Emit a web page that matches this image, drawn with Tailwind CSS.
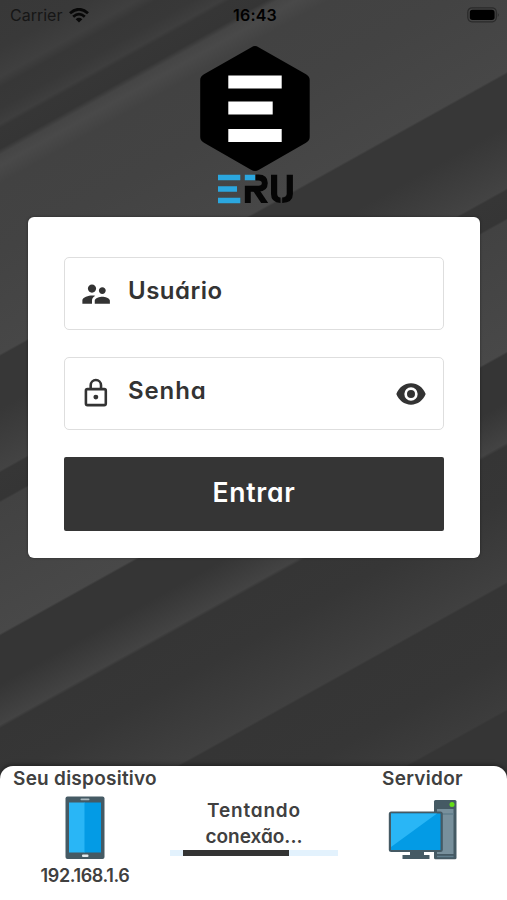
<!DOCTYPE html>
<html lang="pt-BR">
<head>
<meta charset="utf-8">
<meta name="viewport" content="width=device-width, initial-scale=1">
<title>ERU</title>
<script src="https://cdn.jsdelivr.net/npm/@tailwindcss/browser@4"></script>
</head>
<body class="font-['Inter','Open_Sans',sans-serif] [font-feature-settings:'cv11'] text-[#333] bg-[#363636]">
<div class="relative isolate flex h-[900px] w-[507px] flex-col overflow-hidden">
  <!-- diagonal band backdrop -->
  <svg class="absolute inset-0 -z-10" width="507" height="900" viewBox="0 0 507 900" aria-hidden="true">
    <defs>
      <linearGradient id="bands" gradientUnits="userSpaceOnUse" x1="0" y1="0" x2="0" y2="1200">
        <stop offset="0" stop-color="#383838"/><stop offset=".04" stop-color="#393939"/>
        <stop offset=".064" stop-color="#3f3f3f"/><stop offset=".073" stop-color="#373737"/>
        <stop offset=".09" stop-color="#383838"/><stop offset=".103" stop-color="#3e3e3e"/>
        <stop offset=".107" stop-color="#363636"/><stop offset=".124" stop-color="#353535"/>
        <stop offset=".129" stop-color="#454545"/><stop offset=".138" stop-color="#494949"/>
        <stop offset=".153" stop-color="#424242"/><stop offset=".21" stop-color="#434343"/>
        <stop offset=".295" stop-color="#474747"/><stop offset=".297" stop-color="#373737"/>
        <stop offset=".34" stop-color="#373737"/><stop offset=".392" stop-color="#434343"/>
        <stop offset=".394" stop-color="#363636"/><stop offset=".417" stop-color="#353535"/>
        <stop offset=".419" stop-color="#424242"/><stop offset=".528" stop-color="#484848"/>
        <stop offset=".53" stop-color="#353535"/><stop offset=".57" stop-color="#353535"/>
        <stop offset=".585" stop-color="#3b3b3b"/><stop offset=".604" stop-color="#434343"/>
        <stop offset=".607" stop-color="#353535"/><stop offset=".65" stop-color="#363636"/>
        <stop offset=".72" stop-color="#404040"/><stop offset=".722" stop-color="#353535"/>
        <stop offset=".78" stop-color="#363636"/><stop offset=".826" stop-color="#3c3c3c"/>
        <stop offset=".828" stop-color="#353535"/><stop offset="1" stop-color="#353535"/>
      </linearGradient>
    </defs>
    <rect width="507" height="1200" fill="url(#bands)" transform="matrix(1 -.557 0 1 0 0)"/>
  </svg>

  <header class="grid h-[30px] shrink-0 grid-cols-3 items-center pl-[10px] pr-[7px] text-black">
    <div class="flex items-center gap-[7px]">
      <span class="text-[16px] text-[#161616] [font-feature-settings:normal]">Carrier</span>
      <svg width="20" height="15" viewBox="0 0 20 15" fill="none" stroke="#080808" stroke-width="2.8"><path d="M1 5.2Q10-2.6 19 5.2M4.2 8.7Q10 3.6 15.800 8.700"/><path d="M10 14.500L6.700 11.200Q10 8.500 13.300 11.200Z" fill="#080808" stroke="none"/></svg>
    </div>
    <span class="text-center text-[16px] font-semibold tracking-[.2px] [font-feature-settings:normal]">16:43</span>
    <svg class="-mt-px justify-self-end" width="33" height="16" viewBox="0 0 33 16"><rect x=".8" y=".8" width="28.500" height="14" rx="4.200" fill="none" stroke="#2a2a2a" stroke-width="1.200"/><rect x="2.800" y="2.700" width="24.800" height="10.200" rx="2.700"/><path d="M30.800 5.500q1.800 2.300 0 4.600z" fill="#252525"/></svg>
  </header>

  <div class="flex h-[187px] shrink-0 justify-center pl-[2px] pt-4">
    <svg width="112" height="160" viewBox="199 46 112 160" role="img" aria-label="ERU">
      <path d="M251.500 47.200Q255 45 258.500 47.200L306 74.300Q309.700 76.400 309.700 80V137Q309.700 140.500 306 142.700L259 169.700Q255 172.300 251 169.700L204 142.700Q200.200 140.500 200.200 137V80Q200.200 76.400 204 74.300Z"/>
      <path fill="#fff" d="M228.300 75.500h53.400v13h-53.400zM228.300 101.600h44.400v13h-44.400zM228.300 129h53.400v13h-53.400z"/>
      <path fill="#2ba7df" d="M218 174.700h22.300v5.500H218zM218 186.200h19v5.500h-19zM218 197.700h22.300v5.500H218zM244.800 174.700h10.500v5.500h-10.500z"/>
      <path d="M255.500 177.500h3q6.300 0 6.300 5.600t-6.300 5.600H247.800V203" fill="none" stroke="#050505" stroke-width="5.900"/>
      <path d="M252.500 190h7l8.700 13h-7z" fill="#050505"/>
      <path d="M271 174.700h6.200v19q0 3.500 3.300 3.900v5.400Q271 202.500 271 194zM286.700 174.700h6.200V194q0 8.500-10.700 9v-5.400q4.500-.4 4.500-3.900z" fill="#050505"/>
    </svg>
  </div>

  <main class="ml-[28px] flex h-[341px] w-[452px] shrink-0 flex-col rounded-[6px] bg-white px-[36px] pt-[40px] shadow-[0_0_3px_rgba(0,0,0,.4)]">
    <label class="flex h-[73px] items-center rounded-[5px] border-[1.500px] border-[#dedede] pl-[17px]">
      <svg class="shrink-0" width="30" height="30" viewBox="0 0 24 24" fill="#333"><path d="M16.500 12c1.380 0 2.490-1.120 2.490-2.500S17.880 7 16.500 7 14 8.120 14 9.500s1.120 2.500 2.500 2.500zM9 11c1.660 0 2.990-1.340 2.990-3S10.660 5 9 5 6 6.340 6 8s1.340 3 3 3zm7.500 3c-1.830 0-5.500.920-5.500 2.750V19h11v-2.250c0-1.830-3.670-2.750-5.500-2.750zM9 13c-2.330 0-7 1.170-7 3.500V19h7v-2.250c0-.850.330-2.340 2.370-3.470C10.500 13.100 9.660 13 9 13z" transform="matrix(1.1 0 0 1.1 -1.900 -1.200)"/></svg>
      <span class="-mt-[5px] ml-[16px] text-[24px] font-semibold tracking-[.5px]">Usuário</span>
    </label>
    <label class="mt-[27px] flex h-[73px] items-center rounded-[5px] border-[1.500px] border-[#dedede] pl-[16px] pr-[16px]">
      <svg class="shrink-0" width="31" height="31" viewBox="0 0 24 24" fill="none" stroke="#333" stroke-width="2"><rect x="3.800" y="8.600" width="15.400" height="12.400" rx="1.200"/><path d="M7.500 8.600V5.600a4 4 0 0 1 8 0v3"/><circle cx="11.500" cy="14.800" r="1.900" fill="#333" stroke="none"/></svg>
      <span class="-mt-[5px] ml-[16px] text-[24px] font-semibold tracking-[.9px]">Senha</span>
      <svg class="ml-auto shrink-0" width="32" height="32" viewBox="0 0 24 24" fill="#333"><path d="M12 4C7 4 2.730 7.340 1 12c1.730 4.660 6 8 11 8s9.270-3.340 11-8C21.270 7.340 17 4 12 4zm0 13a5 5 0 1 1 0-10 5 5 0 0 1 0 10zm0-8a3 3 0 1 0 0 6 3 3 0 0 0 0-6z"/></svg>
    </label>
    <button class="mt-[27px] h-[74px] shrink-0 rounded-[2px] bg-[#353535] pb-[2px] text-[26.500px] font-semibold tracking-[.7px] text-white">Entrar</button>
  </main>

  <footer class="mt-auto grid h-[134px] shrink-0 grid-cols-[170px_168px_169px] rounded-t-[13px] bg-white text-[19px] font-semibold leading-[25px] text-[#404040] shadow-[0_-1px_5px_rgba(0,0,0,.45)]">
    <section class="flex flex-col items-center">
      <span class="whitespace-nowrap tracking-[.25px]">Seu dispositivo</span>
      <svg class="mt-[5px]" width="40" height="64" viewBox="0 0 40 64"><rect x=".5" y=".5" width="39" height="62.500" rx="2" fill="#455a64"/><path fill="#29b6f6" d="M4 6.500h16v50H4z"/><path fill="#039be5" d="M19.500 6.500H36v50H19.500z"/><rect x="15.500" y="2.600" width="9" height="1.600" rx=".8" fill="#aab8be"/><rect x="17" y="58.500" width="6.500" height="2.400" rx="1" fill="#e3eaed"/></svg>
      <span class="mt-[3px] text-[18px] tracking-[-.4px]">192.168.1.6</span>
    </section>
    <section class="flex flex-col items-center pt-[32px] text-center">
      <span class="leading-[26px]"><span class="tracking-[.8px]">Tentando</span><br>conexão...</span>
      <div class="flex h-[6px] w-full bg-[#e3f2fd] pl-[13px]"><div class="w-[106px] bg-[#333]"></div></div>
    </section>
    <section class="flex flex-col items-center">
      <span class="tracking-[.3px]">Servidor</span>
      <svg class="mt-[8px]" width="70" height="61" viewBox="388 799 70 61"><rect x="434" y="800" width="22.500" height="59.300" rx="1.500" fill="#455a64"/><path fill="#78909c" d="M437 809h16.500v45H437z"/><path d="M437 814h16.500M437 856.500h16.500" stroke="#607d8b" stroke-width="1.500"/><circle cx="452" cy="804.500" r="2.500" fill="#64dd17"/><path fill="#455a64" d="M410 850h14v5h5.500v4H402.500v-4h7.500z"/><rect x="388.800" y="811.500" width="54" height="40.500" rx="2.500" fill="#455a64"/><path fill="#039be5" d="M391 813.500h49.500v36.500H391z"/><path fill="#29b6f6" d="M391 813.500h46L391 847z"/></svg>
    </section>
  </footer>
</div>
</body>
</html>
